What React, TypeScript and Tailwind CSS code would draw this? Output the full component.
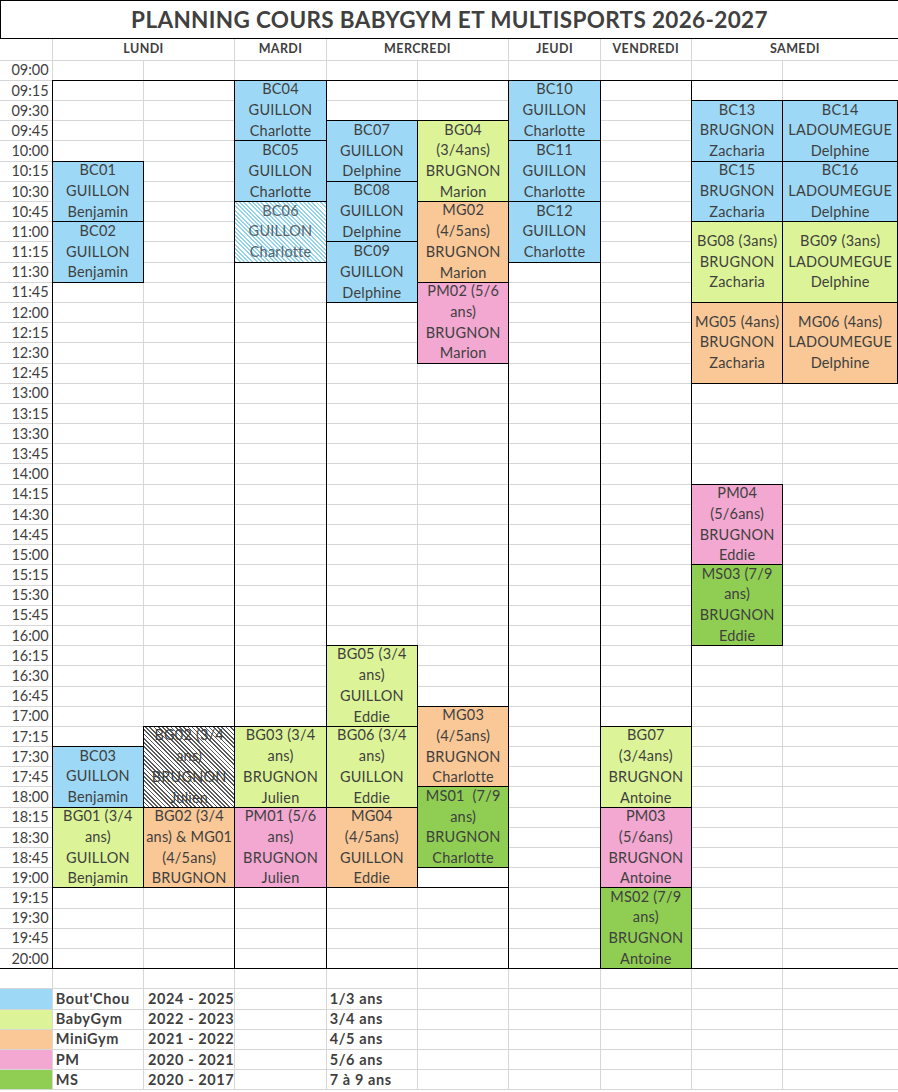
const grid =
  "grid grid-cols-[52.7px_repeat(8,91.33px)_1fr] grid-rows-[39.3px_21.4px_repeat(51,20.19px)]";

const blue = "bg-[#9dd9f6]";
const lime = "bg-[#dcf497]";
const orange = "bg-[#f9c896]";
const pink = "bg-[#f2a8d1]";
const green = "bg-[#8fce52]";
const hatchBlue =
  "bg-[repeating-linear-gradient(45deg,#92d3ee_0px,#92d3ee_1.4px,#ffffff_1.4px,#ffffff_3px)] text-[#55646a]";
const hatchGray =
  "bg-[repeating-linear-gradient(45deg,#5a5a5a_0px,#5a5a5a_1.2px,#ffffff_1.2px,#ffffff_3px)]";

type Slot = { pos: string; bg: string; lines: string[] };

const slots: Slot[] = [
  // lundi
  { pos: "col-[2] row-[8/span_3]", bg: blue, lines: ["BC01", "GUILLON", "Benjamin"] },
  { pos: "col-[2] row-[11/span_3]", bg: blue, lines: ["BC02", "GUILLON", "Benjamin"] },
  { pos: "col-[2] row-[37/span_3]", bg: blue, lines: ["BC03", "GUILLON", "Benjamin"] },
  { pos: "col-[2] row-[40/span_4]", bg: lime, lines: ["BG01 (3/4", "ans)", "GUILLON", "Benjamin"] },
  { pos: "col-[3] row-[36/span_4]", bg: hatchGray, lines: ["BG02 (3/4", "ans)", "BRUGNON", "Julien"] },
  { pos: "col-[3] row-[40/span_4]", bg: orange, lines: ["BG02 (3/4", "ans) & MG01", "(4/5ans)", "BRUGNON"] },
  // mardi
  { pos: "col-[4] row-[4/span_3]", bg: blue, lines: ["BC04", "GUILLON", "Charlotte"] },
  { pos: "col-[4] row-[7/span_3]", bg: blue, lines: ["BC05", "GUILLON", "Charlotte"] },
  { pos: "col-[4] row-[10/span_3]", bg: hatchBlue, lines: ["BC06", "GUILLON", "Charlotte"] },
  { pos: "col-[4] row-[36/span_4]", bg: lime, lines: ["BG03 (3/4", "ans)", "BRUGNON", "Julien"] },
  { pos: "col-[4] row-[40/span_4]", bg: pink, lines: ["PM01 (5/6", "ans)", "BRUGNON", "Julien"] },
  // mercredi
  { pos: "col-[5] row-[6/span_3]", bg: blue, lines: ["BC07", "GUILLON", "Delphine"] },
  { pos: "col-[5] row-[9/span_3]", bg: blue, lines: ["BC08", "GUILLON", "Delphine"] },
  { pos: "col-[5] row-[12/span_3]", bg: blue, lines: ["BC09", "GUILLON", "Delphine"] },
  { pos: "col-[5] row-[32/span_4]", bg: lime, lines: ["BG05 (3/4", "ans)", "GUILLON", "Eddie"] },
  { pos: "col-[5] row-[36/span_4]", bg: lime, lines: ["BG06 (3/4", "ans)", "GUILLON", "Eddie"] },
  { pos: "col-[5] row-[40/span_4]", bg: orange, lines: ["MG04", "(4/5ans)", "GUILLON", "Eddie"] },
  { pos: "col-[6] row-[6/span_4]", bg: lime, lines: ["BG04", "(3/4ans)", "BRUGNON", "Marion"] },
  { pos: "col-[6] row-[10/span_4]", bg: orange, lines: ["MG02", "(4/5ans)", "BRUGNON", "Marion"] },
  { pos: "col-[6] row-[14/span_4]", bg: pink, lines: ["PM02 (5/6", "ans)", "BRUGNON", "Marion"] },
  { pos: "col-[6] row-[35/span_4]", bg: orange, lines: ["MG03", "(4/5ans)", "BRUGNON", "Charlotte"] },
  { pos: "col-[6] row-[39/span_4]", bg: green, lines: ["MS01  (7/9", "ans)", "BRUGNON", "Charlotte"] },
  // jeudi
  { pos: "col-[7] row-[4/span_3]", bg: blue, lines: ["BC10", "GUILLON", "Charlotte"] },
  { pos: "col-[7] row-[7/span_3]", bg: blue, lines: ["BC11", "GUILLON", "Charlotte"] },
  { pos: "col-[7] row-[10/span_3]", bg: blue, lines: ["BC12", "GUILLON", "Charlotte"] },
  // vendredi
  { pos: "col-[8] row-[36/span_4]", bg: lime, lines: ["BG07", "(3/4ans)", "BRUGNON", "Antoine"] },
  { pos: "col-[8] row-[40/span_4]", bg: pink, lines: ["PM03", "(5/6ans)", "BRUGNON", "Antoine"] },
  { pos: "col-[8] row-[44/span_4]", bg: green, lines: ["MS02 (7/9", "ans)", "BRUGNON", "Antoine"] },
  // samedi
  { pos: "col-[9] row-[5/span_3]", bg: blue, lines: ["BC13", "BRUGNON", "Zacharia"] },
  { pos: "col-[10] row-[5/span_3]", bg: blue, lines: ["BC14", "LADOUMEGUE", "Delphine"] },
  { pos: "col-[9] row-[8/span_3]", bg: blue, lines: ["BC15", "BRUGNON", "Zacharia"] },
  { pos: "col-[10] row-[8/span_3]", bg: blue, lines: ["BC16", "LADOUMEGUE", "Delphine"] },
  { pos: "col-[9] row-[11/span_4]", bg: lime, lines: ["BG08 (3ans)", "BRUGNON", "Zacharia"] },
  { pos: "col-[10] row-[11/span_4]", bg: lime, lines: ["BG09 (3ans)", "LADOUMEGUE", "Delphine"] },
  { pos: "col-[9] row-[15/span_4]", bg: orange, lines: ["MG05 (4ans)", "BRUGNON", "Zacharia"] },
  { pos: "col-[10] row-[15/span_4]", bg: orange, lines: ["MG06 (4ans)", "LADOUMEGUE", "Delphine"] },
  { pos: "col-[9] row-[24/span_4]", bg: pink, lines: ["PM04", "(5/6ans)", "BRUGNON", "Eddie"] },
  { pos: "col-[9] row-[28/span_4]", bg: green, lines: ["MS03 (7/9", "ans)", "BRUGNON", "Eddie"] },
];

// black frames around each day, from 09:15 to 20:00
const frames = [
  "col-[2/span_2] row-[4/span_44] -ml-px -mt-px border border-black",
  "col-[4] row-[4/span_44] -ml-px -mt-px border border-black",
  "col-[5/span_2] row-[4/span_44] -ml-px -mt-px border border-black",
  "col-[7] row-[4/span_44] -ml-px -mt-px border border-black",
  "col-[8] row-[4/span_44] -ml-px -mt-px border border-black",
  "col-[9/span_2] row-[4/span_44] -ml-px -mt-px border-l border-y border-black",
  "col-[1] row-[47] border-b border-black",
  "col-[6] row-[43] border-b border-black",
];

const times: string[] = [];
for (let h = 9; h <= 20; h++) {
  for (const m of ["00", "15", "30", "45"]) {
    if (h === 20 && m !== "00") break;
    times.push(`${String(h).padStart(2, "0")}:${m}`);
  }
}

const days = [
  { name: "LUNDI", span: "col-span-2" },
  { name: "MARDI", span: "col-span-1" },
  { name: "MERCREDI", span: "col-span-2" },
  { name: "JEUDI", span: "col-span-1" },
  { name: "VENDREDI", span: "col-span-1" },
  { name: "SAMEDI", span: "col-span-2" },
];

const legend = [
  { color: "bg-[#9dd9f6]", name: "Bout'Chou", years: "2024 - 2025", age: "1/3 ans" },
  { color: "bg-[#dcf497]", name: "BabyGym", years: "2022 - 2023", age: "3/4 ans" },
  { color: "bg-[#f9c896]", name: "MiniGym", years: "2021 - 2022", age: "4/5 ans" },
  { color: "bg-[#f2a8d1]", name: "PM", years: "2020 - 2021", age: "5/6 ans" },
  { color: "bg-[#8fce52]", name: "MS", years: "2020 - 2017", age: "7 à 9 ans" },
];

const line = "border-[#d6d6d6]";

function BlankCells({ count }: { count: number }) {
  return (
    <>
      {Array.from({ length: count }).map((_, i) => (
        <div key={i} className={`border-b ${line} ${i < count - 1 ? "border-r" : ""}`} />
      ))}
    </>
  );
}

export default function App() {
  return (
    <div className="w-[898px] h-[1092px] overflow-hidden bg-white font-['Lato',sans-serif] text-[#3f3f3f]">
      <div className="grid">
        {/* sheet: gridlines, titles, times, legend */}
        <div className={`col-start-1 row-start-1 ${grid}`}>
          <div className="col-span-10 border-l border-y border-black flex items-center justify-center text-[22.5px] font-bold text-[#404040] tracking-[0.35px]">
            PLANNING COURS BABYGYM ET MULTISPORTS 2026-2027
          </div>

          <div className={`border-r border-b ${line}`} />
          {days.map((d, i) => (
            <div
              key={d.name}
              className={`${d.span} border-b ${line} ${i < days.length - 1 ? "border-r" : ""} flex items-center justify-center text-[12.5px] font-bold tracking-[0.4px]`}
            >
              {d.name}
            </div>
          ))}

          {times.map((t) => (
            <div key={t} className="contents">
              <div className={`border-r border-b ${line} flex items-center justify-end pr-[3px] text-[14.5px]`}>
                {t}
              </div>
              <BlankCells count={9} />
            </div>
          ))}

          <div className={`border-r border-b ${line}`} />
          <BlankCells count={9} />

          {legend.map((l) => (
            <div key={l.name} className="contents">
              <div className={`${l.color} border-r border-b ${line}`} />
              <div className={`border-r border-b ${line} flex items-center pl-[3px] text-[14.5px] font-bold tracking-[0.6px] whitespace-nowrap`}>
                {l.name}
              </div>
              <div className={`border-r border-b ${line} flex items-center pl-[4px] text-[14.5px] font-bold tracking-[0.6px] whitespace-nowrap`}>
                {l.years}
              </div>
              <div className={`border-r border-b ${line}`} />
              <div className={`border-r border-b ${line} flex items-center pl-[3px] text-[14.5px] font-bold tracking-[0.6px] whitespace-nowrap`}>
                {l.age}
              </div>
              <BlankCells count={5} />
            </div>
          ))}
        </div>

        {/* courses */}
        <div className={`col-start-1 row-start-1 ${grid}`}>
          {frames.map((f) => (
            <div key={f} className={f} />
          ))}
          {slots.map((s) => (
            <div
              key={s.pos}
              className={`${s.pos} ${s.bg} -ml-px -mt-px border border-black overflow-hidden flex flex-col items-center justify-center text-center text-[14.5px] leading-[20.8px] tracking-[0.2px]`}
            >
              {s.lines.map((ln, i) => (
                <div key={i} className="whitespace-pre">
                  {ln}
                </div>
              ))}
            </div>
          ))}
        </div>
      </div>
    </div>
  );
}
